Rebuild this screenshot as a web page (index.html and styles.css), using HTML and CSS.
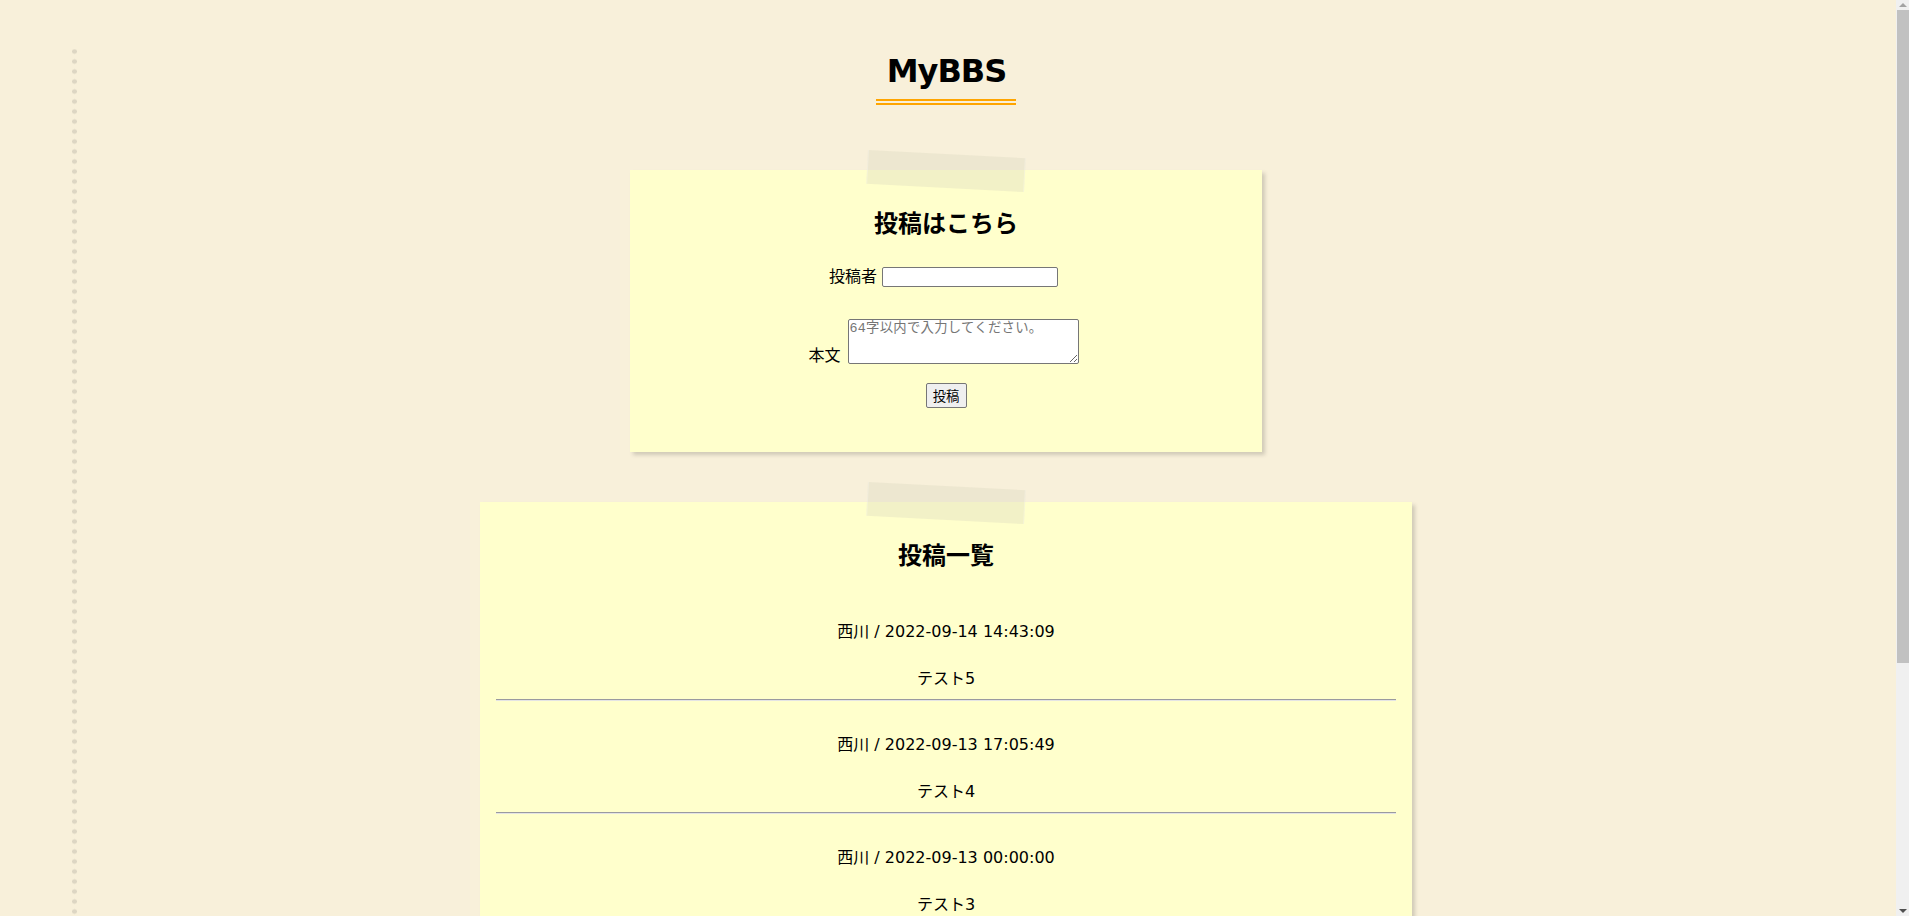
FILE: index.html
```html
<!DOCTYPE html>
<html lang="ja">
<head>
<meta charset="utf-8">
<title>MyBBS</title>
<link rel="stylesheet" href="styles.css">
</head>
<body>
  <header class="site-header">
    <h1 class="site-title"><span class="site-title__text">MyBBS</span></h1>
  </header>
  <main class="board">
    <section class="card card--form">
      <div class="tape"></div>
      <h2 class="card__title">投稿はこちら</h2>
      <form class="post-form" onsubmit="return false;">
        <div class="form-row form-row--name">
          <label class="form-label" for="name">投稿者</label>
          <input class="form-input" id="name" type="text">
        </div>
        <div class="form-row form-row--body">
          <label class="form-label form-label--bottom" for="body">本文</label>
          <textarea class="form-textarea" id="body" placeholder="64字以内で入力してください。"></textarea>
        </div>
        <div class="form-row form-row--submit">
          <button class="form-button" type="submit">投稿</button>
        </div>
      </form>
    </section>

    <section class="card card--list">
      <div class="tape"></div>
      <h2 class="card__title">投稿一覧</h2>
      <div class="posts">
        <div class="post">
          <p class="post__meta">西川 / 2022-09-14 14:43:09</p>
          <p class="post__body">テスト5</p>
          <hr class="post__rule">
        </div>
        <div class="post">
          <p class="post__meta">西川 / 2022-09-13 17:05:49</p>
          <p class="post__body">テスト4</p>
          <hr class="post__rule">
        </div>
        <div class="post">
          <p class="post__meta">西川 / 2022-09-13 00:00:00</p>
          <p class="post__body">テスト3</p>
          <hr class="post__rule">
        </div>
        <div class="post">
          <p class="post__meta">西川 / 2022-09-12 00:00:00</p>
          <p class="post__body">テスト2</p>
          <hr class="post__rule">
        </div>
        <div class="post">
          <p class="post__meta">西川 / 2022-09-11 00:00:00</p>
          <p class="post__body">テスト1</p>
          <hr class="post__rule">
        </div>
      </div>
    </section>
  </main>
  <div class="scrollbar" aria-hidden="true">
    <div class="scrollbar__arrow scrollbar__arrow--up"></div>
    <div class="scrollbar__track">
      <div class="scrollbar__thumb"></div>
    </div>
    <div class="scrollbar__arrow scrollbar__arrow--down"></div>
  </div>
</body>
</html>
```
FILE: styles.css
```css
html {
  background: #f8f0da;
}

body {
  margin: 49px 0 0;
  padding: 0 17px 59px 0;
  font-family: "DejaVu Sans", "Noto Sans CJK JP", sans-serif;
  font-size: 16px;
  line-height: 24px;
  color: #000;
  background-image: radial-gradient(circle at 2.5px 5px, #ddd6c3 2.1px, rgba(221, 214, 195, 0) 2.7px);
  background-size: 5px 10px;
  background-repeat: repeat-y;
  background-position: 72px -2.5px;
}

.site-header {
  text-align: center;
}

.site-title {
  margin: 0;
  font-size: 32px;
  line-height: 44px;
  font-weight: bold;
}

.site-title__text {
  display: inline-block;
  padding: 0 10px 6px 11px;
  letter-spacing: -1px;
  border-bottom: 6px double #ffa500;
}

.board {
  display: flex;
  flex-direction: column;
  align-items: center;
}

.card {
  position: relative;
  box-sizing: border-box;
  background: #ffffcc;
  box-shadow: 3px 3px 4px rgba(0, 0, 0, 0.16);
  padding: 16px;
  text-align: center;
}

.card--form {
  width: 632px;
  margin-top: 65px;
  padding-bottom: 44px;
}

.card--list {
  width: 932px;
  margin-top: 50px;
}

.tape {
  position: absolute;
  left: 50%;
  top: 1px;
  width: 156px;
  height: 34px;
  background: rgba(220, 215, 190, 0.36);
  border-left: 1px solid rgba(255, 255, 255, 0.25);
  border-right: 1px solid rgba(255, 255, 255, 0.25);
  transform: translate(-50%, -50%) rotate(3deg);
}

.card__title {
  margin: 20px 0;
  font-family: "DejaVu Sans", "Noto Sans CJK JP", sans-serif;
  font-size: 24px;
  line-height: 36px;
  font-weight: bold;
}

.post-form {
  display: block;
}

.form-row {
  display: flex;
  justify-content: center;
  gap: 5px;
}

.form-row--name {
  margin-top: 25px;
  align-items: center;
  padding-right: 5px;
}

.form-row--body {
  margin-top: 32px;
  align-items: flex-end;
  gap: 7px;
  padding-right: 5px;
}

.form-row--submit {
  margin-top: 19px;
}

.form-label {
  font-size: 16px;
  line-height: 20px;
}

.form-label--bottom {
  line-height: 16px;
}

.form-input {
  box-sizing: border-box;
  width: 176px;
  height: 20px;
  margin: 0;
  padding: 1px 2px;
  border: 1px solid #767676;
  border-radius: 2px;
  background: #fff;
  font-family: "DejaVu Sans", "Noto Sans CJK JP", sans-serif;
  font-size: 13.33px;
}

.form-textarea {
  box-sizing: border-box;
  width: 231px;
  height: 45px;
  margin: 0;
  padding: 1px 1px;
  border: 1px solid #767676;
  border-radius: 2px;
  background: #fff;
  font-family: "Liberation Mono", "Noto Sans CJK JP", monospace;
  font-size: 13.33px;
  line-height: 16px;
  letter-spacing: 0.3px;
}

.form-textarea::placeholder {
  color: #757575;
}

.form-button {
  box-sizing: border-box;
  width: 41px;
  height: 25px;
  margin: 0;
  padding: 1px 6px;
  border: 1px solid #767676;
  border-radius: 2px;
  background: #efefef;
  color: #000;
  font-family: "Noto Sans CJK JP", sans-serif;
  font-size: 13.33px;
  line-height: 20px;
}

.post__meta {
  margin: 32px 0 0;
}

.post:first-child .post__meta {
  margin-top: 46px;
}

.post__body {
  margin: 23px 0 0;
}

.post__rule {
  margin: 8px 0 0;
  border: 0;
  border-top: 1px solid #9a9aa0;
  border-bottom: 1px solid #e4e4e4;
  height: 0;
}

/* imitation of the browser's vertical scrollbar seen in the capture */
.scrollbar {
  position: fixed;
  top: 0;
  right: 0;
  bottom: 0;
  width: 13px;
  display: flex;
  flex-direction: column;
  background: #f0f0f0;
}

.scrollbar__arrow {
  height: 10px;
  flex: none;
  display: flex;
  align-items: center;
  justify-content: center;
}

.scrollbar__arrow::before {
  content: "";
  width: 0;
  height: 0;
  border-left: 4px solid transparent;
  border-right: 4px solid transparent;
}

.scrollbar__arrow--up::before {
  border-bottom: 4px solid #a3a3a3;
}

.scrollbar__arrow--down::before {
  border-top: 4px solid #505050;
}

.scrollbar__track {
  flex: 1;
  padding: 0 0 0 1px;
}

.scrollbar__thumb {
  height: 653px;
  background: #c1c1c1;
}
```
